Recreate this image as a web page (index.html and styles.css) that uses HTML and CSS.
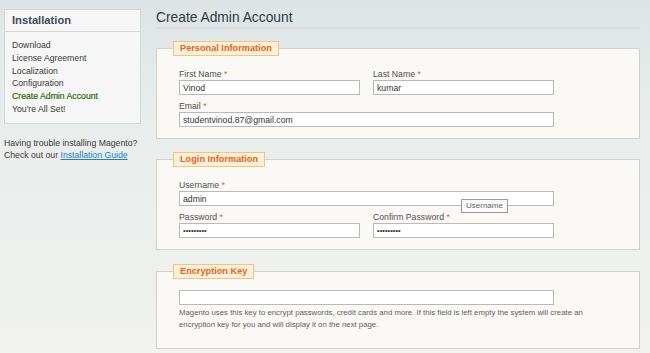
FILE: index.html
```html
<!DOCTYPE html>
<html>
<head>
<meta charset="utf-8">
<link rel="stylesheet" href="styles.css">
</head>
<body>
<div class="page">
  <aside class="side">
    <div class="side-box">
      <div class="side-head">Installation</div>
      <ul class="steps">
        <li>Download</li>
        <li>License Agreement</li>
        <li>Localization</li>
        <li>Configuration</li>
        <li class="active">Create Admin Account</li>
        <li>You're All Set!</li>
      </ul>
    </div>
    <p class="help">Having trouble installing Magento?<br>Check out our <a href="#">Installation Guide</a></p>
  </aside>
  <main class="main">
    <h1 class="title">Create Admin Account</h1>
    <fieldset class="box">
      <legend class="legend">Personal Information</legend>
      <div class="grid">
        <div class="field">
          <label class="label">First Name <span class="req">*</span></label>
          <input class="input" type="text" value="Vinod">
        </div>
        <div class="field">
          <label class="label">Last Name <span class="req">*</span></label>
          <input class="input" type="text" value="kumar">
        </div>
        <div class="field wide">
          <label class="label">Email <span class="req">*</span></label>
          <input class="input" type="text" value="studentvinod.87@gmail.com">
        </div>
      </div>
    </fieldset>
    <fieldset class="box">
      <legend class="legend">Login Information</legend>
      <div class="grid">
        <div class="field wide tipwrap">
          <label class="label">Username <span class="req">*</span></label>
          <input class="input" type="text" value="admin">
          <span class="tooltip">Username</span>
        </div>
        <div class="field">
          <label class="label">Password <span class="req">*</span></label>
          <input class="input pw" type="password" value="123456789">
        </div>
        <div class="field">
          <label class="label">Confirm Password <span class="req">*</span></label>
          <input class="input pw" type="password" value="123456789">
        </div>
      </div>
    </fieldset>
    <fieldset class="box box-last">
      <legend class="legend">Encryption Key</legend>
      <input class="input input-wide" type="text" value="">
      <p class="note">Magento uses this key to encrypt passwords, credit cards and more. If this field is left empty the system will create an<br>encryption key for you and will display it on the next page.</p>
    </fieldset>
  </main>
</div>
</body>
</html>
```

FILE: styles.css
```css
html, body {
  margin: 0;
  padding: 0;
}
body {
  width: 650px;
  height: 353px;
  overflow: hidden;
  font-family: "Liberation Sans", Arial, sans-serif;
  font-size: 8.7px;
  color: #333;
  background: linear-gradient(180deg, #dee4e6 0%, #e9edec 35%, #f1f2ef 100%);
}
.page {
  display: flex;
  align-items: flex-start;
}
.side {
  width: 137px;
  margin-left: 4px;
  margin-top: 9px;
}
.side-box {
  background: #f5f6f5;
  border: 1px solid #d4d7d7;
}
.side-head {
  height: 21px;
  line-height: 21px;
  padding-left: 7px;
  font-size: 11.2px;
  font-weight: bold;
  color: #3a4d5a;
  border-bottom: 1px solid #d6d9d9;
}
.steps {
  list-style: none;
  margin: 0;
  padding: 7px 0 7px 7px;
}
.steps li {
  line-height: 12.8px;
  color: #3b3b3b;
}
.steps li.active {
  color: #2f6a10;
  -webkit-text-stroke: 0.2px #2f6a10;
}
.help {
  margin: 13px 0 0 0;
  line-height: 12.3px;
  color: #3b3b3b;
}
.help a {
  color: #1e7ec8;
}
.main {
  width: 484px;
  margin-left: 15px;
  padding-top: 9px;
}
.title {
  margin: 0;
  font-size: 13.8px;
  font-weight: normal;
  line-height: 17px;
  color: #2e3b42;
  padding-bottom: 1px;
  border-bottom: 2px solid #d8dcdb;
}
.box {
  margin: 12px 0 0 0;
  padding: 12px 22px 11px 22px;
  border: 1px solid #d5d2cc;
  background: #fbf9f5;
  min-width: 0;
}
.box + .box {
  margin-top: 13px;
}
.box.box-last {
  margin-top: 14px;
  padding-top: 11px;
  padding-bottom: 17px;
}
.legend {
  margin-left: -6px;
  padding: 0 6px;
  height: 13px;
  line-height: 13px;
  background: #fdefd9;
  border: 1px solid #f0c482;
  color: #e2661e;
  font-weight: bold;
  font-size: 9.2px;
}
.grid {
  display: grid;
  grid-template-columns: 181px 181px;
  column-gap: 13px;
  row-gap: 5px;
}
.field {
  display: flex;
  flex-direction: column;
}
.wide {
  grid-column: 1 / 3;
}
.tipwrap {
  position: relative;
}
.label {
  height: 12px;
  line-height: 12px;
  color: #505050;
}
.req {
  color: #eb5a3c;
}
.input {
  box-sizing: border-box;
  height: 15px;
  margin: 0;
  padding: 0 3px;
  border: 1px solid #b9b9b9;
  background: #fff;
  font-family: "Liberation Sans", Arial, sans-serif;
  font-size: 8.7px;
  color: #333;
  outline: none;
}
.pw {
  font-size: 7.5px;
}
.input-wide {
  display: block;
  width: 375px;
}
.tooltip {
  position: absolute;
  left: 282px;
  top: 20px;
  height: 12px;
  line-height: 12px;
  padding: 0 4px;
  border: 1px solid #9a9a9a;
  background: #fafafa;
  color: #666;
  font-size: 8px;
}
.note {
  margin: 2px 0 0 0;
  line-height: 12px;
  font-size: 7.8px;
  color: #5e5e5e;
}
```
